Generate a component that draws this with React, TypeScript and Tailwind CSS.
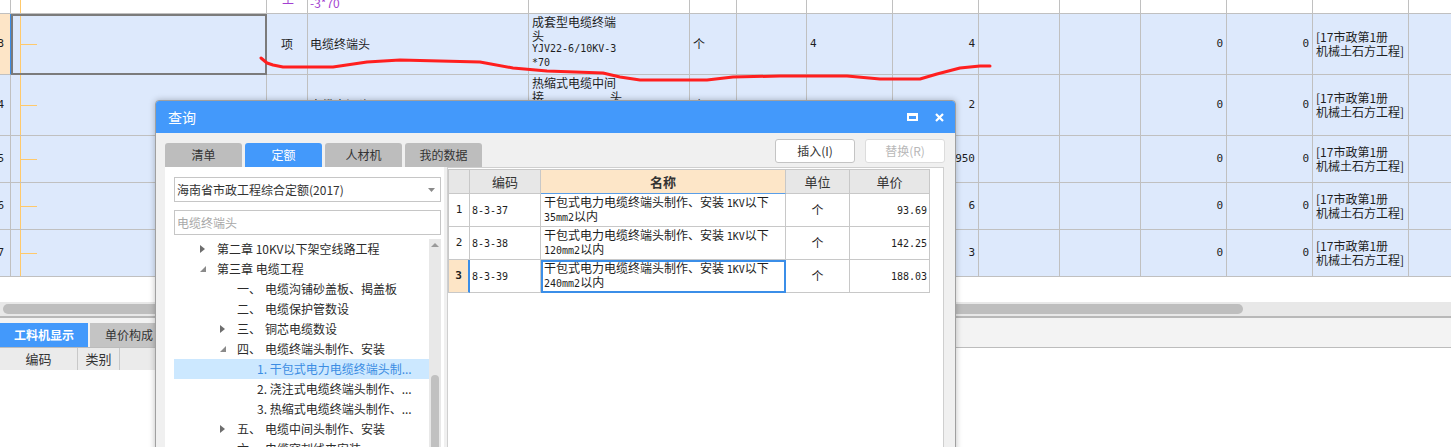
import React from 'react';

const cjk = "font-['Noto_Sans_CJK_SC',sans-serif]";
const mono = "font-['DejaVu_Sans_Mono','Noto_Sans_CJK_SC',monospace]";

const colW = [
  'w-[11px]',
  'w-[256px]',
  'w-[41px]',
  'w-[221px]',
  'w-[161px]',
  'w-[47px]',
  'w-[70px]',
  'w-[86px]',
  'w-[86px]',
  'w-[81px]',
  'w-[81px]',
  'w-[86px]',
  'w-[86px]',
  'w-[96px]',
  'w-[80px]',
];

function TreeLine({ tick = true }: { tick?: boolean }) {
  return (
    <div className="flex h-full">
      <div className="ml-[9px] w-px bg-[#ffc96b]" />
      {tick && <div className="h-px w-[16px] self-center bg-[#ffc96b]" />}
    </div>
  );
}

function RowNo({ n }: { n: string }) {
  return (
    <div className={`flex h-full items-center justify-end pr-[6px] text-[11px] ${mono}`}>
      {n}
    </div>
  );
}

function Txt({ children, pl = 'pl-[2px]' }: { children: React.ReactNode; pl?: string }) {
  return <div className={`flex h-full items-center text-[12px] ${pl}`}>{children}</div>;
}

function Right({ v }: { v: string }) {
  return (
    <div className={`flex h-full items-center justify-end pr-[3px] text-[11px] ${mono}`}>{v}</div>
  );
}

function Ref() {
  return (
    <div className="flex h-full flex-col justify-center pl-[3px] text-[12px] leading-[14px]">
      <span>[17市政第1册</span>
      <span>机械土石方工程]</span>
    </div>
  );
}

type Row = { h: string; bg: string; cells: React.ReactNode[]; extra?: Record<number, string> };

const rows: Row[] = [
  {
    h: 'h-[14px]',
    bg: 'bg-white',
    cells: [
      null,
      <TreeLine tick={false} />,
      <div className="-mt-[11px] pl-[15px] text-[12px] text-[#a33fd1]">主</div>,
      <div className={`-mt-[6px] pl-[2px] text-[12px] text-[#a33fd1]`}>-3*70</div>,
    ],
  },
  {
    h: 'h-[61px]',
    bg: 'bg-[#dde9fc]',
    extra: {
      0: 'bg-[#fde5c7] border-r-[#3b8ee8]',
      1: 'outline-2 -outline-offset-2 outline-[#7b7b7b]',
    },
    cells: [
      <RowNo n="3" />,
      <TreeLine />,
      <Txt pl="pl-[14px]">项</Txt>,
      <Txt>电缆终端头</Txt>,
      <div className="flex flex-col pl-[3px] pt-[1px] text-[12px] leading-[13.5px]">
        <span>成套型电缆终端</span>
        <span>头</span>
        <span className={`text-[10px] ${mono}`}>YJV22-6/10KV-3</span>
        <span className={`text-[10px] ${mono}`}>*70</span>
      </div>,
      <Txt pl="pl-[3px]">个</Txt>,
      null,
      <div className={`flex h-full items-center pl-[3px] text-[11px] ${mono}`}>4</div>,
      <Right v="4" />,
      null,
      null,
      <Right v="0" />,
      <Right v="0" />,
      <Ref />,
      null,
    ],
  },
  {
    h: 'h-[61px]',
    bg: 'bg-[#dde9fc]',
    cells: [
      <RowNo n="4" />,
      <TreeLine />,
      <Txt pl="pl-[14px]">项</Txt>,
      <Txt>电缆中间头</Txt>,
      <div className="flex flex-col pl-[3px] pt-[1px] text-[12px] leading-[13.5px]">
        <span>热缩式电缆中间</span>
        <span className="flex w-[90px] justify-between">
          <span>接</span>
          <span>头</span>
        </span>
      </div>,
      <Txt pl="pl-[3px]">个</Txt>,
      null,
      null,
      <Right v="2" />,
      null,
      null,
      <Right v="0" />,
      <Right v="0" />,
      <Ref />,
      null,
    ],
  },
  {
    h: 'h-[47px]',
    bg: 'bg-[#dde9fc]',
    cells: [
      <RowNo n="5" />,
      <TreeLine />,
      null,
      null,
      null,
      null,
      null,
      null,
      <Right v="950" />,
      null,
      null,
      <Right v="0" />,
      <Right v="0" />,
      <Ref />,
      null,
    ],
  },
  {
    h: 'h-[47px]',
    bg: 'bg-[#dde9fc]',
    cells: [
      <RowNo n="6" />,
      <TreeLine />,
      null,
      null,
      null,
      null,
      null,
      null,
      <Right v="6" />,
      null,
      null,
      <Right v="0" />,
      <Right v="0" />,
      <Ref />,
      null,
    ],
  },
  {
    h: 'h-[47px]',
    bg: 'bg-[#dde9fc]',
    cells: [
      <RowNo n="7" />,
      <TreeLine />,
      null,
      null,
      null,
      null,
      null,
      null,
      <Right v="3" />,
      null,
      null,
      <Right v="0" />,
      <Right v="0" />,
      <Ref />,
      null,
    ],
  },
];

function GridRow({ row }: { row: Row }) {
  return (
    <div className={`flex ${row.h} ${row.bg}`}>
      {colW.map((w, i) => (
        <div
          key={i}
          className={`shrink-0 overflow-hidden border-r border-b border-[#c0c0c0] ${w} ${row.extra?.[i] ?? ''}`}
        >
          {row.cells[i] ?? null}
        </div>
      ))}
    </div>
  );
}

const treeIndent = ['pl-[26px]', 'pl-[46px]', 'pl-[66px]'];

type Item = { lv: number; tri?: 'r' | 'd'; num?: string; text: string; sel?: boolean };

const items: Item[] = [
  { lv: 0, tri: 'r', text: '第二章 10KV以下架空线路工程' },
  { lv: 0, tri: 'd', text: '第三章 电缆工程' },
  { lv: 1, num: '一、', text: '电缆沟铺砂盖板、揭盖板' },
  { lv: 1, num: '二、', text: '电缆保护管数设' },
  { lv: 1, tri: 'r', num: '三、', text: '铜芯电缆数设' },
  { lv: 1, tri: 'd', num: '四、', text: '电缆终端头制作、安装' },
  { lv: 2, text: '1. 干包式电力电缆终端头制...', sel: true },
  { lv: 2, text: '2. 浇注式电缆终端头制作、...' },
  { lv: 2, text: '3. 热缩式电缆终端头制作、...' },
  { lv: 1, tri: 'r', num: '五、', text: '电缆中间头制作、安装' },
  { lv: 1, num: '六、', text: '电缆穿刺线夹安装' },
];

function TreeItem({ it }: { it: Item }) {
  return (
    <div
      className={`flex h-[20px] items-center text-[12px] ${treeIndent[it.lv]} ${
        it.sel ? 'bg-[#cce8ff] text-[#3b8de3]' : 'text-[#2b2b2b]'
      }`}
    >
      <span className="flex w-[17px] items-center">
        {it.tri === 'r' && (
          <svg width="5" height="8" viewBox="0 0 5 8">
            <path d="M0 0L5 4L0 8Z" fill="#6e6e6e" />
          </svg>
        )}
        {it.tri === 'd' && (
          <svg width="6" height="6" viewBox="0 0 6 6">
            <path d="M6 0V6H0Z" fill="#8a8a8a" />
          </svg>
        )}
      </span>
      {it.num && <span className="w-[28px] shrink-0">{it.num}</span>}
      <span className="whitespace-nowrap">{it.text}</span>
    </div>
  );
}

const tcol = ['w-[21px]', 'w-[71px]', 'w-[245px]', 'w-[64px]', 'w-[80px]'];

const quotas = [
  { n: '1', code: '8-3-37', l2: '35mm2以内', price: '93.69' },
  { n: '2', code: '8-3-38', l2: '120mm2以内', price: '142.25' },
  { n: '3', code: '8-3-39', l2: '240mm2以内', price: '188.03', sel: true },
];

function QuotaTable() {
  return (
    <div className="w-[482px] border-t border-l border-[#c8c8c8]">
      <div className="flex h-[24px] text-[13px] text-[#333]">
        <div className={`${tcol[0]} border-r border-b border-[#c8c8c8] bg-[#e7e7e7]`} />
        <div className={`${tcol[1]} flex items-center justify-center border-r border-b border-[#c8c8c8] bg-[#e7e7e7]`}>
          编码
        </div>
        <div className={`${tcol[2]} flex items-center justify-center border-r border-b border-[#c8c8c8] border-b-[#5a9ee8] bg-[#fde6c8] font-bold`}>
          名称
        </div>
        <div className={`${tcol[3]} flex items-center justify-center border-r border-b border-[#c8c8c8] bg-[#e7e7e7]`}>
          单位
        </div>
        <div className={`${tcol[4]} flex items-center justify-center border-r border-b border-[#c8c8c8] bg-[#e7e7e7]`}>
          单价
        </div>
      </div>
      {quotas.map((q) => (
        <div key={q.n} className="flex h-[33px] text-[#1e1e1e]">
          <div
            className={`${tcol[0]} flex items-center justify-center border-r border-b border-[#c8c8c8] text-[11px] ${mono} ${
              q.sel ? 'border-r-2 border-r-[#3b8ee8] bg-[#fde5c6] font-bold' : ''
            }`}
          >
            {q.n}
          </div>
          <div className={`${tcol[1]} flex items-center border-r border-b border-[#c8c8c8] pl-[2px] text-[10px] ${mono}`}>
            {q.code}
          </div>
          <div
            className={`${tcol[2]} flex flex-col justify-center border-r border-b border-[#c8c8c8] pl-[3px] text-[12px] leading-[12.5px] ${
              q.sel ? 'outline-2 -outline-offset-2 outline-[#3b8ee8]' : ''
            }`}
          >
            <span>
              干包式电力电缆终端头制作、安装 <span className={`text-[10px] ${mono}`}>1KV</span>以下
            </span>
            <span>
              <span className={`text-[10px] ${mono}`}>{q.l2.replace('以内', '')}</span>以内
            </span>
          </div>
          <div className={`${tcol[3]} flex items-center justify-center border-r border-b border-[#c8c8c8] text-[12px]`}>
            个
          </div>
          <div className={`${tcol[4]} flex items-center justify-end border-r border-b border-[#c8c8c8] pr-[2px] text-[10px] ${mono}`}>
            {q.price}
          </div>
        </div>
      ))}
    </div>
  );
}

function Dialog() {
  return (
    <div className="absolute top-[100px] left-[155px] flex h-[360px] w-[801px] flex-col overflow-hidden rounded-t-[4px] border border-[#a0a0a0] bg-[#f0f0f0] shadow-[0_0_6px_rgba(0,0,0,0.25)]">
      <div className="flex h-[32px] shrink-0 items-center bg-[#4399fb] pr-[11px] pl-[12px]">
        <span className="text-[14px] text-white">查询</span>
        <div className="ml-auto flex items-center gap-[17px]">
          <svg width="11" height="8" viewBox="0 0 11 8">
            <path d="M0 0H11V8H0Z M2 3V6H9V3Z" fill="white" fillRule="evenodd" />
          </svg>
          <svg width="9" height="9" viewBox="0 0 9 9">
            <path d="M1 1L8 8M8 1L1 8" stroke="white" strokeWidth="2.2" />
          </svg>
        </div>
      </div>
      <div className="flex h-[34px] shrink-0 items-end justify-between pr-[10px] pl-[9px]">
        <div className="flex gap-[3px] text-[12px]">
          {['清单', '定额', '人材机', '我的数据'].map((t) => (
            <div
              key={t}
              className={`flex h-[24px] w-[77px] items-center justify-center rounded-t-[3px] ${
                t === '定额' ? 'bg-[#4399fb] text-white' : 'bg-[#bdbdbd] text-[#333]'
              }`}
            >
              {t}
            </div>
          ))}
        </div>
        <div className="mb-[4px] flex gap-[10px] text-[12px]">
          <div className="flex h-[24px] w-[80px] items-center justify-center rounded-[3px] border border-[#c4c4c4] bg-white text-[#333]">
            插入(I)
          </div>
          <div className="flex h-[24px] w-[80px] items-center justify-center rounded-[3px] border border-[#dcdcdc] bg-white text-[#b8b8b8]">
            替换(R)
          </div>
        </div>
      </div>
      <div className="flex min-h-0 flex-1 pl-[9px]">
        <div className="flex w-[279px] flex-col bg-white pr-[3px] pl-[9px]">
          <div className="mt-[10px] flex h-[25px] items-center justify-between border border-[#c6c6c6] pr-[5px] pl-[2px] text-[12px] text-[#333]">
            <span>海南省市政工程综合定额(2017)</span>
            <svg width="7" height="4" viewBox="0 0 7 4">
              <path d="M0 0H7L3.5 4Z" fill="#8a8a8a" />
            </svg>
          </div>
          <div className="mt-[8px] flex h-[25px] items-center border border-[#c6c6c6] pl-[2px] text-[12px] text-[#a8a8a8]">
            电缆终端头
          </div>
          <div className="mt-[4px] flex min-h-0 flex-1">
            <div className="min-w-0 flex-1 overflow-hidden">
              {items.map((it, i) => (
                <TreeItem key={i} it={it} />
              ))}
            </div>
            <div className="flex w-[12px] flex-col bg-[#e8e8e8]">
              <div className="flex h-[12px] items-center justify-center">
                <svg width="8" height="4" viewBox="0 0 8 4">
                  <path d="M0 4L4 0L8 4Z" fill="#9a9a9a" />
                </svg>
              </div>
              <div className="h-[124px]" />
              <div className="mx-[2px] flex-1 rounded-t-full bg-[#c1c1c1]" />
            </div>
          </div>
        </div>
        <div className="ml-[3px] w-[497px] border border-[#cfcfcf] bg-white pt-px">
          <QuotaTable />
        </div>
      </div>
    </div>
  );
}

export default function App() {
  return (
    <div className={`relative h-[447px] w-[1451px] overflow-hidden bg-white text-[#1e1e1e] ${cjk}`}>
      <div className="flex flex-col">
        {rows.map((r, i) => (
          <GridRow key={i} row={r} />
        ))}
      </div>
      <div className="h-[25px]" />
      <div className="flex h-[14px] items-center bg-[#e8e8e8] pl-[3px]">
        <div className="h-[10px] w-[1240px] rounded-full bg-[#bebebe]" />
      </div>
      <div className="h-[2px] bg-[#b8b8b8]" />
      <div className="flex h-[29px] items-end gap-[2px] bg-[#f3f3f3] text-[12px]">
        <div className="flex h-[24px] w-[88px] items-center justify-center bg-[#4399fb] font-bold text-white">
          工料机显示
        </div>
        <div className="flex h-[24px] w-[78px] items-center justify-center bg-[#c4c4c4] text-[#333]">
          单价构成
        </div>
      </div>
      <div className="h-px bg-[#bcbcbc]" />
      <div className="flex h-[22px] w-[700px] bg-[#ebebeb] text-[13px] text-[#333]">
        <div className="flex w-[78px] items-center justify-center border-r border-[#c8c8c8]">编码</div>
        <div className="flex w-[42px] items-center justify-center border-r border-[#c8c8c8]">类别</div>
        <div className="flex w-[100px] items-center justify-center border-r border-[#c8c8c8]">名称</div>
      </div>

      <svg className="pointer-events-none absolute inset-0" width="1451" height="447">
        <polyline
          points="261,58 267,63 273,65 283,67 333,67 367,62 400,60 440,61 480,62 513,68 547,71 603,73 620,77 640,80 707,80 733,77 780,76 847,76 880,79 920,79 937,74 960,68 980,66 990,66"
          fill="none"
          stroke="#ff1f1f"
          strokeWidth="3"
          strokeLinejoin="round"
          strokeLinecap="round"
        />
      </svg>

      <Dialog />
    </div>
  );
}
